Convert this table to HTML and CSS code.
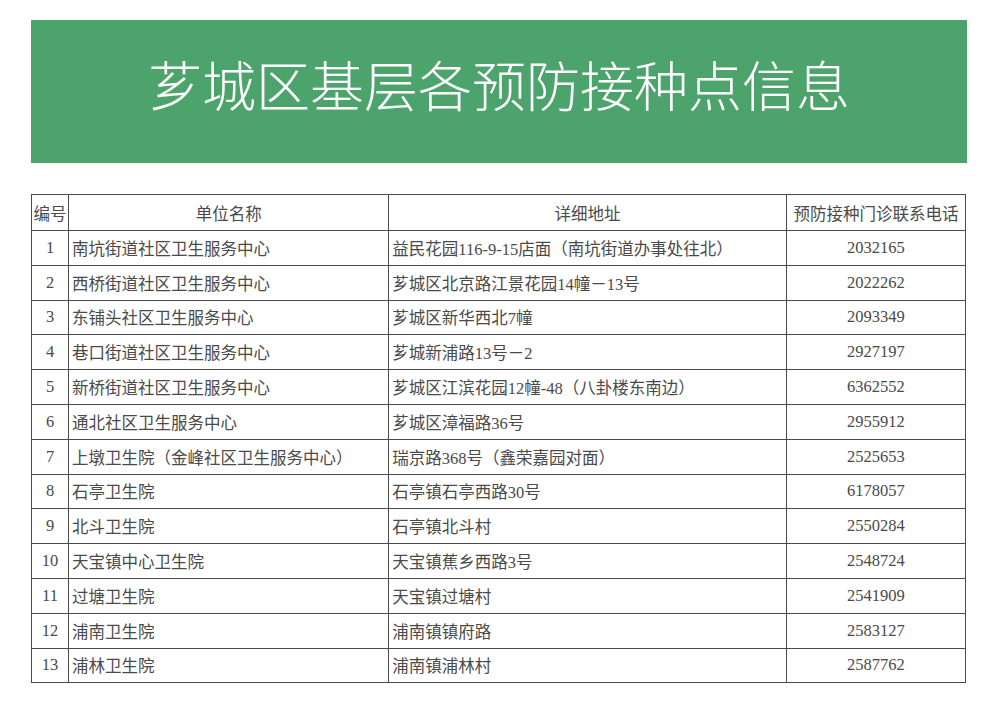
FILE: index.html
```html
<!DOCTYPE html>
<html lang="zh-CN">
<head>
<meta charset="utf-8">
<title>芗城区基层各预防接种点信息</title>
<link rel="stylesheet" href="styles.css">
</head>
<body>
<div class="page">
  <header class="banner">
    <h1 class="title">芗城区基层各预防接种点信息</h1>
  </header>
  <table class="info">
    <colgroup>
      <col class="c-no"><col class="c-name"><col class="c-addr"><col class="c-tel">
    </colgroup>
    <thead>
      <tr><th class="no">编号</th><th>单位名称</th><th>详细地址</th><th>预防接种门诊联系电话</th></tr>
    </thead>
    <tbody>
      <tr><td class="no">1</td><td>南坑街道社区卫生服务中心</td><td>益民花园116-9-15店面（南坑街道办事处往北）</td><td class="tel">2032165</td></tr>
      <tr><td class="no">2</td><td>西桥街道社区卫生服务中心</td><td>芗城区北京路江景花园14幢－13号</td><td class="tel">2022262</td></tr>
      <tr><td class="no">3</td><td>东铺头社区卫生服务中心</td><td>芗城区新华西北7幢</td><td class="tel">2093349</td></tr>
      <tr><td class="no">4</td><td>巷口街道社区卫生服务中心</td><td>芗城新浦路13号－2</td><td class="tel">2927197</td></tr>
      <tr><td class="no">5</td><td>新桥街道社区卫生服务中心</td><td>芗城区江滨花园12幢-48（八卦楼东南边）</td><td class="tel">6362552</td></tr>
      <tr><td class="no">6</td><td>通北社区卫生服务中心</td><td>芗城区漳福路36号</td><td class="tel">2955912</td></tr>
      <tr><td class="no">7</td><td>上墩卫生院（金峰社区卫生服务中心）</td><td>瑞京路368号（鑫荣嘉园对面）</td><td class="tel">2525653</td></tr>
      <tr><td class="no">8</td><td>石亭卫生院</td><td>石亭镇石亭西路30号</td><td class="tel">6178057</td></tr>
      <tr><td class="no">9</td><td>北斗卫生院</td><td>石亭镇北斗村</td><td class="tel">2550284</td></tr>
      <tr><td class="no">10</td><td>天宝镇中心卫生院</td><td>天宝镇蕉乡西路3号</td><td class="tel">2548724</td></tr>
      <tr><td class="no">11</td><td>过塘卫生院</td><td>天宝镇过塘村</td><td class="tel">2541909</td></tr>
      <tr><td class="no">12</td><td>浦南卫生院</td><td>浦南镇镇府路</td><td class="tel">2583127</td></tr>
      <tr><td class="no">13</td><td>浦林卫生院</td><td>浦南镇浦林村</td><td class="tel">2587762</td></tr>
    </tbody>
  </table>
</div>
</body>
</html>
```

FILE: styles.css
```css
html, body {
  margin: 0;
  padding: 0;
  background: #ffffff;
}
.page {
  width: 996px;
  padding-top: 20px;
}
.banner {
  margin-left: 31px;
  width: 936px;
  height: 143px;
  background: #4ca36b;
  display: flex;
  align-items: center;
  justify-content: center;
}
.title {
  margin: 0 0 16px 0;
  font-family: "Noto Sans CJK SC", "Noto Sans", sans-serif;
  font-weight: 300;
  font-size: 54px;
  line-height: 1;
  color: #ffffff;
  letter-spacing: 0;
}
.info {
  margin: 31px 0 0 31px;
  width: 935px;
  border-collapse: collapse;
  table-layout: fixed;
  font-family: "Liberation Serif", "Noto Sans CJK SC", serif;
  font-size: 16.5px;
  color: #4a4a4a;
}
.c-no { width: 37px; }
.c-name { width: 320px; }
.c-addr { width: 397px; }
.c-tel { width: 179px; }
.info th, .info td {
  border: 1px solid #4a4a4a;
  padding: 0 3px;
  white-space: nowrap;
  overflow: hidden;
}
.info th {
  height: 35px;
  font-weight: normal;
  text-align: center;
}
.info td {
  height: 33.8px;
  text-align: left;
}
.info th.no {
  padding: 0 1px;
}
.info td.no, .info td.tel {
  text-align: center;
}
```
